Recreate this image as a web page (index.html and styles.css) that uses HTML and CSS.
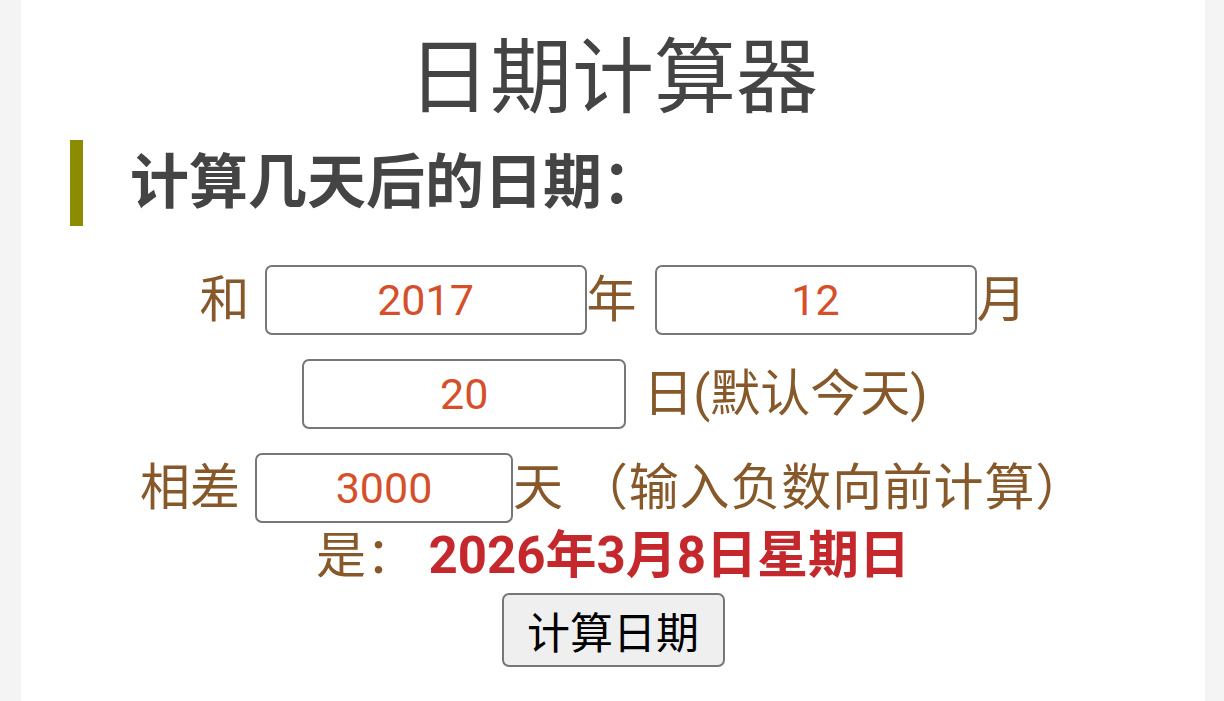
FILE: index.html
```html
<!DOCTYPE html>
<html lang="zh-CN">
<head>
<meta charset="utf-8">
<title>日期计算器</title>
<link rel="stylesheet" href="styles.css">
</head>
<body>
<div class="panel">
  <h1 class="title">日期计算器</h1>
  <h2 class="section">计算几天后的日期：</h2>
  <form class="calc">
    <div class="row row1">
      <span class="lbl">和</span>
      <input class="box box-wide sp-a" type="text" value="2017">
      <span class="lbl">年</span>
      <input class="box box-wide sp-b" type="text" value="12">
      <span class="lbl">月</span>
    </div>
    <div class="row row2">
      <input class="box box-day" type="text" value="20">
      <span class="lbl sp-c">日(默认今天)</span>
    </div>
    <div class="row row3">
      <span class="lbl">相差</span>
      <input class="box box-mid sp-d" type="text" value="3000">
      <span class="lbl">天</span>
      <span class="lbl note">（输入负数向前计算）</span>
    </div>
    <div class="row row4">
      <span class="lbl">是： </span>
      <span class="result">2026年3月8日星期日</span>
    </div>
    <div class="row row5">
      <button class="btn" type="button">计算日期</button>
    </div>
  </form>
</div>
</body>
</html>
```
FILE: styles.css
```css
html, body {
  margin: 0;
  padding: 0;
  background: #f4f4f4;
  height: 701px;
  overflow: hidden;
}
body {
  font-family: Roboto, "Noto Sans CJK SC", sans-serif;
}
.panel {
  background: #ffffff;
  margin: 0 19px 0 21px;
  height: 701px;
  padding-top: 30px;
  box-sizing: border-box;
}
.title {
  margin: 0;
  text-align: center;
  font-size: 82px;
  line-height: 96px;
  font-weight: normal;
  color: #444444;
}
.section {
  box-sizing: border-box;
  margin: 14px 0 0 49px;
  border-left: 13px solid #8c8c00;
  padding: 0 0 12px 47px;
  height: 86px;
  display: flex;
  align-items: center;
  font-size: 59px;
  font-weight: bold;
  color: #444444;
}
.calc {
  margin-top: 39px;
  display: flex;
  flex-direction: column;
  gap: 24px;
}
.row {
  display: flex;
  justify-content: center;
  align-items: center;
  color: #87592a;
  font-size: 50px;
}
.lbl {
  white-space: pre;
  line-height: 56px;
}
.box {
  box-sizing: border-box;
  height: 70px;
  border: 2px solid #777777;
  border-radius: 7px;
  background: #fff;
  color: #d5502a;
  font-family: Roboto, "Noto Sans CJK SC", sans-serif;
  font-size: 43px;
  text-align: center;
  padding: 0;
  margin: 0;
}
.box-wide { width: 322px; }
.box-day { width: 324px; }
.box-mid { width: 258px; }
.sp-a { margin-left: 15px; }
.sp-b { margin-left: 18px; }
.sp-c { margin-left: 17px; }
.sp-d { margin-left: 15px; }
.row2 { margin-left: 4px; }
.row3 .note {
  margin-left: 15px;
  letter-spacing: 0.8px;
}
.row4 { margin-top: -19px; }
.result {
  color: #c4282d;
  font-weight: bold;
  font-size: 51px;
  line-height: 56px;
}
.row5 { margin-top: -15px; }
.btn {
  box-sizing: border-box;
  width: 223px;
  height: 74px;
  background: #efefef;
  border: 2px solid #777777;
  border-radius: 7px;
  font-family: Roboto, "Noto Sans CJK SC", sans-serif;
  font-size: 43px;
  color: #000;
  padding: 0;
}
```
